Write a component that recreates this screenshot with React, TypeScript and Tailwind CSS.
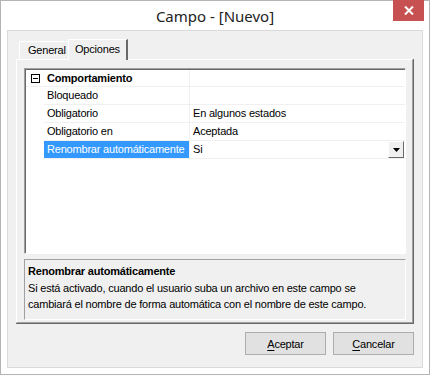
import React from 'react';

const rows = [
  { name: 'Bloqueado', value: '' },
  { name: 'Obligatorio', value: 'En algunos estados' },
  { name: 'Obligatorio en', value: 'Aceptada' },
];

const Mnemonic = ({ first, rest }: { first: string; rest: string }) => (
  <span>
    <span className="underline underline-offset-[2px]">{first}</span>
    {rest}
  </span>
);

const App = () => {
  return (
    <div
      className="w-[430px] h-[375px] bg-white border border-[#b4b4b4] flex flex-col text-[11px] tracking-[-0.2px] text-black"
      style={{ fontFamily: '"Liberation Sans", Arial, sans-serif' }}
    >
      {/* title bar */}
      <div className="relative h-[29px] flex items-center justify-center">
        <span className="text-[15px] tracking-normal text-[#222] pt-[1px]" style={{ fontFamily: '"Noto Sans", sans-serif' }}>
          Campo - [Nuevo]
        </span>
        <div className="absolute right-[5px] -top-[1px] w-[31px] h-[21px] bg-[#c75050] flex items-center justify-center">
          <svg width="10" height="9" viewBox="0 0 10 9">
            <path d="M1 0.5 L9 8.5 M9 0.5 L1 8.5" stroke="#fff" strokeWidth="2" />
          </svg>
        </div>
      </div>

      {/* client area */}
      <div className="mx-[6px] h-[338px] border border-[#dadada] bg-[#f0f0f0] px-[8px] pt-[8px] flex flex-col">
        {/* tabs */}
        <div className="h-[20px] flex items-end pl-[3px] relative z-10">
          <div className="h-[18px] w-[50px] border-t border-l border-white bg-[#f0f0f0] pl-[8px] leading-[17px]">
            General
          </div>
          <div className="h-[21px] w-[60px] -ml-[1px] -mb-[1px] border-t border-l border-white border-r-2 border-r-[#696969] bg-[#f0f0f0] pl-[6px] leading-[18px]">
            Opciones
          </div>
        </div>

        {/* tab page */}
        <div className="h-[265px] border-r border-b border-[#696969]">
          <div className="h-full border-t border-l border-white border-r border-b border-r-[#a0a0a0] border-b-[#a0a0a0] pl-[7px] pr-[6px] pt-[8px] flex flex-col">
            {/* property grid */}
            <div className="h-[186px] border-t border-l border-[#a0a0a0] border-r border-b border-r-white border-b-white">
              <div className="h-full border-t border-l border-[#696969] bg-white flex flex-col">
                <div className="h-[17px] flex border-b border-[#f0f0f0]">
                  <div className="w-[18px] flex items-center justify-center">
                    <div className="w-[9px] h-[9px] border border-black flex items-center justify-center">
                      <div className="w-[5px] h-[1px] bg-black" />
                    </div>
                  </div>
                  <div className="w-[145px] pl-[3px] font-bold leading-[16px]">Comportamiento</div>
                  <div className="w-px bg-[#f0f0f0]" />
                  <div className="flex-1" />
                </div>
                {rows.map((r) => (
                  <div key={r.name} className="h-[18px] flex">
                    <div className="w-[18px]" />
                    <div className="flex-1 flex border-b border-[#f0f0f0]">
                      <div className="w-[145px] pl-[3px] leading-[17px] whitespace-nowrap">{r.name}</div>
                      <div className="w-px bg-[#f0f0f0]" />
                      <div className="flex-1 pl-[3px] leading-[17px] whitespace-nowrap">{r.value}</div>
                    </div>
                  </div>
                ))}
                <div className="h-[18px] flex">
                  <div className="w-[18px]" />
                  <div className="flex-1 flex border-b border-[#f0f0f0]">
                    <div className="w-[145px] pl-[3px] leading-[17px] bg-[#3399ff] text-white whitespace-nowrap overflow-hidden">
                      Renombrar automáticamente
                    </div>
                    <div className="w-px bg-[#f0f0f0]" />
                    <div className="flex-1 pl-[3px] leading-[17px] flex">
                      <span className="flex-1">Si</span>
                      <div className="w-[16px] h-[17px] mr-[1px] bg-[#f0f0f0] border-t border-l border-white border-r border-b border-r-[#696969] border-b-[#696969] flex items-center justify-center">
                        <svg width="7" height="4" viewBox="0 0 7 4">
                          <path d="M0 0 H7 L3.5 4 Z" fill="#000" />
                        </svg>
                      </div>
                    </div>
                  </div>
                </div>
                <div className="flex-1" />
              </div>
            </div>

            {/* help box */}
            <div className="mt-[5px] h-[61px] border-t border-l border-[#a0a0a0] border-r border-b border-r-white border-b-white bg-[#f0f0f0] pl-[3px] pt-[4px] whitespace-nowrap">
              <div className="font-bold leading-[14px]">Renombrar automáticamente</div>
              <div className="leading-[16px] mt-[2px]">
                Si está activado, cuando el usuario suba un archivo en este campo se
                <br />
                cambiará el nombre de forma automática con el nombre de este campo.
              </div>
            </div>
          </div>
        </div>

        {/* buttons */}
        <div className="mt-[8px] flex justify-end gap-[7px]">
          <button className="w-[81px] h-[23px] bg-[#e1e1e1] border border-[#adadad] text-[11px] leading-[20px]">
            <Mnemonic first="A" rest="ceptar" />
          </button>
          <button className="w-[81px] h-[23px] bg-[#e1e1e1] border border-[#adadad] text-[11px] leading-[20px]">
            <Mnemonic first="C" rest="ancelar" />
          </button>
        </div>
      </div>
    </div>
  );
};

export default App;
